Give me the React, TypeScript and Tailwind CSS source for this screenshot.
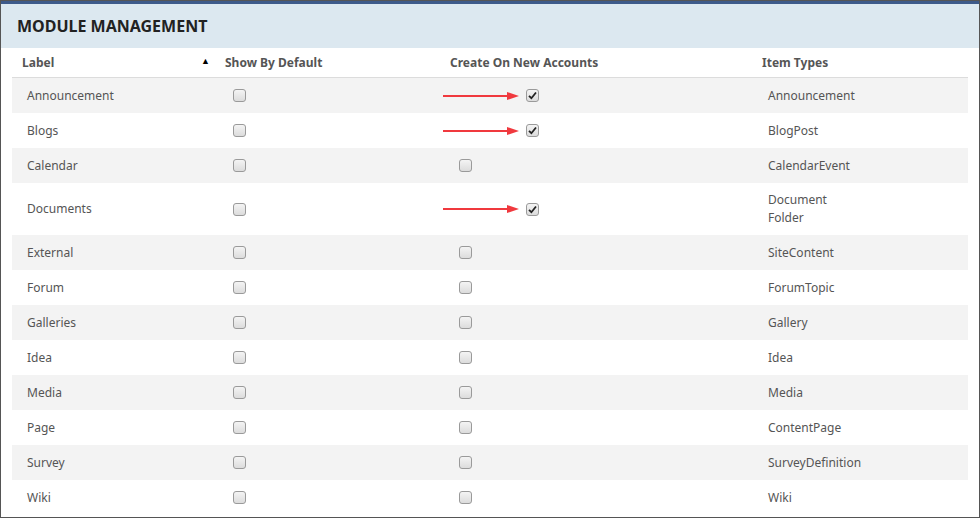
const rows: { label: string; checked: boolean; types: string[] }[] = [
  { label: 'Announcement', checked: true, types: ['Announcement'] },
  { label: 'Blogs', checked: true, types: ['BlogPost'] },
  { label: 'Calendar', checked: false, types: ['CalendarEvent'] },
  { label: 'Documents', checked: true, types: ['Document', 'Folder'] },
  { label: 'External', checked: false, types: ['SiteContent'] },
  { label: 'Forum', checked: false, types: ['ForumTopic'] },
  { label: 'Galleries', checked: false, types: ['Gallery'] },
  { label: 'Idea', checked: false, types: ['Idea'] },
  { label: 'Media', checked: false, types: ['Media'] },
  { label: 'Page', checked: false, types: ['ContentPage'] },
  { label: 'Survey', checked: false, types: ['SurveyDefinition'] },
  { label: 'Wiki', checked: false, types: ['Wiki'] },
]

function Box({ checked }: { checked?: boolean }) {
  return (
    <span className="inline-flex w-[13px] h-[13px] items-center justify-center rounded-[3px] border border-[#9a9a9a] bg-gradient-to-b from-[#f4f4f4] to-[#dcdcdc]">
      {checked && (
        <svg width="9" height="9" viewBox="0 0 9 9">
          <path d="M1 4.8 L3.4 7.2 L8 1.5" fill="none" stroke="#222" strokeWidth="1.8" />
        </svg>
      )}
    </span>
  )
}

function Arrow() {
  return (
    <svg width="76" height="8" viewBox="0 0 76 8" className="mr-[7px]">
      <line x1="0" y1="4" x2="66" y2="4" stroke="#f0393e" strokeWidth="2" />
      <path d="M64 0 L76 4 L64 8 Z" fill="#f0393e" />
    </svg>
  )
}

const cols = 'grid grid-cols-[206px_225px_312px_1fr]'

export default function App() {
  return (
    <div className="w-[980px] h-[518px] border border-[#555] bg-white overflow-hidden font-['Liberation_Sans',Arial,sans-serif]">
      <div className="h-[3px] bg-[#3d5a8a]" />
      <div className="h-[44px] bg-[#dce8f0] flex items-center pl-[16px] text-[16px] font-bold text-[#222]">
        MODULE MANAGEMENT
      </div>
      <div className="mx-[11px]">
        <div className={`${cols} h-[30px] items-center border-b border-[#dcdcdc] text-[12px] font-bold text-[#555]`}>
          <div className="pl-[10px] flex justify-between pr-[8px]">
            <span>Label</span>
            <span className="text-[9px] text-black">▲</span>
          </div>
          <div className="pl-[7px]">Show By Default</div>
          <div className="pl-[7px]">Create On New Accounts</div>
          <div className="pl-[7px]">Item Types</div>
        </div>
        {rows.map((r, i) => (
          <div
            key={r.label}
            className={`${cols} items-center text-[12px] text-[#555] ${r.types.length > 1 ? 'h-[52px]' : 'h-[35px]'} ${i % 2 === 0 ? 'bg-[#f3f3f3]' : 'bg-white'}`}
          >
            <div className="pl-[15px]">{r.label}</div>
            <div className="pl-[15px] flex"><Box /></div>
            <div className="flex items-center">
              {r.checked ? <Arrow /> : <span className="w-[16px]" />}
              <Box checked={r.checked} />
            </div>
            <div className="pl-[13px] leading-[18px]">
              {r.types.map((t) => <div key={t}>{t}</div>)}
            </div>
          </div>
        ))}
      </div>
    </div>
  )
}
